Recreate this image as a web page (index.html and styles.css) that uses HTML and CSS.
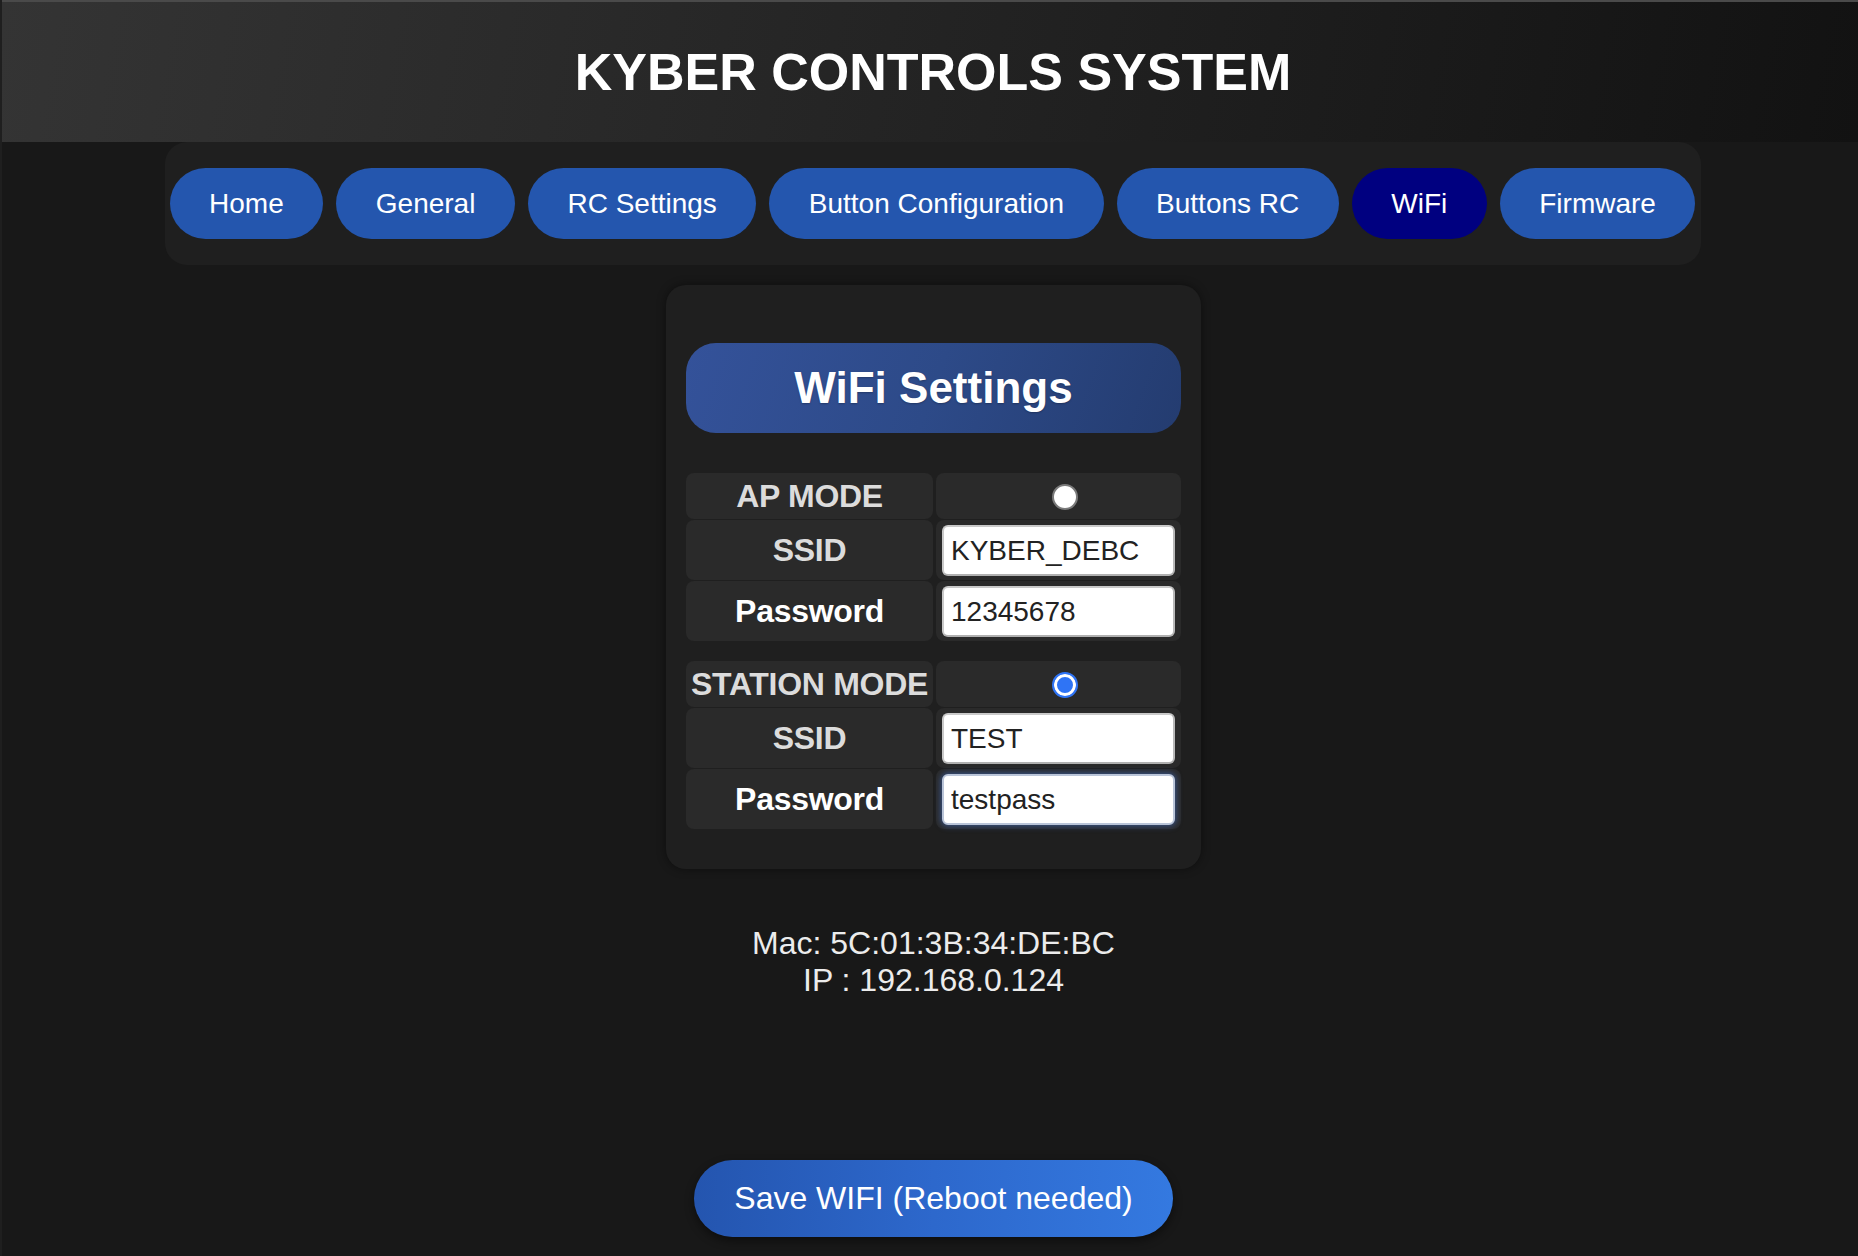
FILE: index.html
```html
<!DOCTYPE html>
<html lang="en">
<head>
<meta charset="utf-8">
<title>Kyber Controls System - WiFi</title>
<link rel="stylesheet" href="styles.css">
</head>
<body>
  <header class="top">
    <h1 class="top__title">KYBER CONTROLS SYSTEM</h1>
  </header>
  <nav class="nav">
    <a class="nav__btn" href="#">Home</a>
    <a class="nav__btn" href="#">General</a>
    <a class="nav__btn" href="#">RC Settings</a>
    <a class="nav__btn" href="#">Button Configuration</a>
    <a class="nav__btn" href="#">Buttons RC</a>
    <a class="nav__btn nav__btn--active" href="#">WiFi</a>
    <a class="nav__btn" href="#">Firmware</a>
  </nav>
  <main class="card">
    <h2 class="card__title">WiFi Settings</h2>
    <div class="group">
      <div class="cell cell--label cell--mode">AP MODE</div>
      <div class="cell cell--value"><input class="radio" type="radio" name="mode"></div>
      <div class="cell cell--label">SSID</div>
      <div class="cell cell--value"><input class="field" type="text" value="KYBER_DEBC"></div>
      <div class="cell cell--label cell--white">Password</div>
      <div class="cell cell--value"><input class="field" type="text" value="12345678"></div>
    </div>
    <div class="group">
      <div class="cell cell--label cell--mode">STATION MODE</div>
      <div class="cell cell--value"><input class="radio radio--on" type="radio" name="mode" checked></div>
      <div class="cell cell--label">SSID</div>
      <div class="cell cell--value"><input class="field" type="text" value="TEST"></div>
      <div class="cell cell--label cell--white">Password</div>
      <div class="cell cell--value"><input class="field field--focus" type="text" value="testpass"></div>
    </div>
  </main>
  <div class="info">
    <div>Mac: 5C:01:3B:34:DE:BC</div>
    <div>IP : 192.168.0.124</div>
  </div>
  <div class="save-wrap">
    <button class="save" type="button">Save WIFI (Reboot needed)</button>
  </div>
</body>
</html>
```

FILE: styles.css
```css
* { box-sizing: border-box; }

html, body { height: 100%; }

body {
  margin: 0;
  min-height: 100vh;
  background: #181818;
  border-left: 2px solid #1f1f1f;
  font-family: "Liberation Sans", Arial, sans-serif;
  color: #fff;
  display: flex;
  flex-direction: column;
}

.top {
  height: 142px;
  flex: none;
  border-top: 2px solid #4a4a4a;
  margin-left: -2px;
  border-left: 2px solid #4a4a4a;
  background: linear-gradient(100deg, #343434 0%, #2a2a2a 30%, #1e1e1e 65%, #121212 100%);
  display: flex;
  align-items: center;
  justify-content: center;
}

.top__title {
  margin: 0;
  font-size: 52px;
  font-weight: 700;
  line-height: 60px;
  color: #fff;
  padding-left: 6px;
}

.nav {
  align-self: center;
  display: flex;
  gap: 13px;
  padding: 26px 6px 26px 5px;
  background: #1f1f1f;
  border-radius: 22px;
  margin-left: 6px;
}

.nav__btn {
  display: block;
  padding: 0 39.5px;
  height: 71px;
  line-height: 71px;
  font-size: 28px;
  color: #fff;
  text-decoration: none;
  background: #2456ae;
  border-radius: 36px;
  white-space: nowrap;
}

.nav__btn--active { background: #000080; }

.card {
  align-self: center;
  width: 535px;
  margin: 20px 0 0 7px;
  padding: 20px 20px 20px;
  background: #1f1f1f;
  border-radius: 20px;
  box-shadow: 0 0 10px rgba(0, 0, 0, 0.45);
}

.card__title {
  margin: 38px 0 40px;
  height: 90px;
  line-height: 90px;
  text-align: center;
  font-size: 44px;
  font-weight: 700;
  color: #fff;
  background: linear-gradient(110deg, #34529a 0%, #2d4a88 50%, #243c70 100%);
  border-radius: 30px;
  text-shadow: 0 1px 2px rgba(0, 0, 0, 0.25);
}

.group {
  display: grid;
  grid-template-columns: 247px 245px;
  column-gap: 3px;
  row-gap: 1px;
  margin-bottom: 20px;
}

.cell {
  background: #2a2a2a;
  border-radius: 8px;
  display: flex;
  align-items: center;
  justify-content: center;
}

.cell--label {
  font-size: 32px;
  font-weight: 700;
  line-height: 37px;
  color: #dcdcdc;
  white-space: nowrap;
  letter-spacing: -0.3px;
}

.cell--mode { padding: 5px 0 4px; }

.cell--white { color: #fff; }

.cell--value { padding: 5px 6px 4px; }

.radio {
  -webkit-appearance: none;
  appearance: none;
  width: 26px;
  height: 26px;
  margin: 0 0 0 13px;
  border-radius: 50%;
  background: #fff;
  border: 2px solid #7a7a7a;
}

.radio--on {
  background: #2f74f5;
  border-color: #2f74f5;
  box-shadow: inset 0 0 0 3px #fff;
}

.field {
  display: block;
  width: 100%;
  height: 51px;
  padding: 0 7px;
  font-family: "Liberation Sans", Arial, sans-serif;
  font-size: 28px;
  color: #222;
  background: #fff;
  border: 2px solid #c9c9c9;
  border-bottom-color: #b0b0b0;
  border-right-color: #b8b8b8;
  border-radius: 6px;
  outline: none;
}

.field--focus {
  border-color: #b9c4d8;
  box-shadow: 0 0 6px 1px rgba(70, 120, 220, 0.55);
}

.info {
  margin: 56px 0 0 7px;
  text-align: center;
  font-size: 32px;
  line-height: 37px;
  color: #ececec;
}

.save-wrap {
  margin-top: auto;
  padding-bottom: 19px;
  display: flex;
  justify-content: center;
  padding-left: 7px;
}

.save {
  height: 77px;
  padding: 0 40px;
  font-family: "Liberation Sans", Arial, sans-serif;
  font-size: 32px;
  color: #fff;
  border: none;
  border-radius: 40px;
  background: linear-gradient(90deg, #2455af 0%, #2d68cc 50%, #3479e0 100%);
  box-shadow: 0 4px 10px rgba(0, 0, 0, 0.45);
}
```
